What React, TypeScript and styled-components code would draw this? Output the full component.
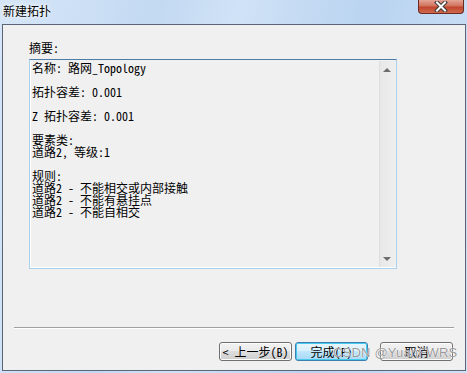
import React from 'react';
import styled, { createGlobalStyle } from 'styled-components';

const Global = createGlobalStyle`
  body {
    margin: 0;
    background: #c9ddf3;
  }
`

const Window = styled.div`
  position: relative;
  width: 467px;
  height: 373px;
  box-sizing: border-box;
  background: linear-gradient(100deg, #d6e6f8 0%, #c3d9f2 30%, #d0e2f6 45%, #b9d3f0 70%, #cfe2f7 100%);
  display: flex;
  flex-direction: column;
  overflow: hidden;
`

const TitleBar = styled.div`
  height: 24px;
  flex-shrink: 0;
  display: flex;
  align-items: flex-start;
  justify-content: space-between;
  padding-left: 3px;
  box-sizing: border-box;
`

const Title = styled.span`
  margin-top: 3px;
  font-family: "Noto Sans CJK SC", sans-serif;
  font-size: 12px;
  line-height: 16px;
  color: #000;
  text-shadow: 0 0 6px #fff, 0 0 3px #fff;
`

const CloseButton = styled.div`
  width: 46px;
  height: 14px;
  margin-right: 3px;
  box-sizing: border-box;
  border: 1px solid #6b2a22;
  border-top: none;
  border-radius: 0 0 4px 4px;
  background: linear-gradient(#e4a596 0%, #d2735d 45%, #c1452d 55%, #d06a4f 100%);
  display: flex;
  align-items: center;
  justify-content: center;
`

const Client = styled.div`
  flex: 1;
  margin: 0 1px 2px 2px;
  border: 1px solid #5a6677;
  background: #f0f0f0;
  display: flex;
  flex-direction: column;
  font-family: "Noto Sans Mono CJK SC", "Noto Sans CJK SC", monospace;
  font-size: 12px;
  color: #000;
`

const Body = styled.div`
  padding: 16px 0 0 26px;
`

const Label = styled.div`
  line-height: 14px;
  height: 14px;
`

const TextBox = styled.div`
  margin-top: 4px;
  width: 368px;
  height: 210px;
  box-sizing: border-box;
  border: 1px solid #a9d1ec;
  border-top-color: #4c7ca8;
  box-shadow: inset 1px 0 #fff, inset 0 -1px #fff;
  display: flex;
`

const TextArea = styled.pre`
  flex: 1;
  margin: 0;
  padding: 2px 0 0 2px;
  font: inherit;
  line-height: 12px;
  white-space: pre;
`

const Scrollbar = styled.div`
  width: 16px;
  margin: 1px 1px 1px 0;
  background: linear-gradient(90deg, #dcdcdc 0px, #e9e9e9 2px, #eeeeee 100%);
  display: flex;
  flex-direction: column;
  justify-content: space-between;
  align-items: center;
  padding: 7px 0 6px;
  box-sizing: border-box;
`

const Arrow = styled.div<{ $down?: boolean }>`
  width: 0;
  height: 0;
  border-left: 4px solid transparent;
  border-right: 4px solid transparent;
  ${p => p.$down ? 'border-top: 4px solid #6d6d6d;' : 'border-bottom: 4px solid #6d6d6d;'}
`

const Separator = styled.div`
  margin: 58px 11px 0 11px;
  height: 1px;
  background: #a0a0a0;
  border-bottom: 1px solid #fff;
`

const ButtonRow = styled.div`
  display: flex;
  justify-content: flex-end;
  padding: 13px 12px 0 0;
`

const Button = styled.button<{ $default?: boolean; $gap?: number }>`
  width: 73px;
  height: 19px;
  margin-left: ${p => p.$gap ?? 0}px;
  padding: 0;
  box-sizing: border-box;
  border: 1px solid ${p => p.$default ? '#3c7fb1' : '#707070'};
  border-radius: 3px;
  background: ${p => p.$default
    ? 'linear-gradient(#eaf6fd 0%, #d9f0fc 45%, #bee6fd 50%, #a7d9f5 100%)'
    : 'linear-gradient(#f2f2f2 0%, #ebebeb 45%, #dddddd 50%, #cfcfcf 100%)'};
  box-shadow: inset 0 0 0 1px ${p => p.$default ? '#48c9f0' : '#fcfcfc'};
  font-family: "Noto Sans Mono CJK SC", "Noto Sans CJK SC", monospace;
  font-size: 12px;
  line-height: 15px;
  color: #000;
`

// CSDN watermark stamped over the button row
const Watermark = styled.div`
  position: absolute;
  left: 333px;
  top: 345px;
  font-family: "Liberation Sans", Arial, sans-serif;
  font-size: 13px;
  letter-spacing: 0.2px;
  color: rgba(125, 125, 125, 0.8);
  text-shadow: 0 0 1px #fff, 0 0 1px #fff;
  pointer-events: none;
`

const summary = `名称: 路网_Topology

拓扑容差: 0.001

Z 拓扑容差: 0.001

要素类:
道路2, 等级:1

规则:
道路2 - 不能相交或内部接触
道路2 - 不能有悬挂点
道路2 - 不能自相交`

export default function App() {
  return (
    <>
      <Global />
      <Window>
        <TitleBar>
          <Title>新建拓扑</Title>
          <CloseButton>
            <svg width="14" height="11" viewBox="0 0 14 11">
              <path d="M3 1.5 L11 9.5 M11 1.5 L3 9.5" stroke="#3a3a3a" strokeWidth="4" strokeLinecap="square" />
              <path d="M3 1.5 L11 9.5 M11 1.5 L3 9.5" stroke="#fff" strokeWidth="2" strokeLinecap="square" />
            </svg>
          </CloseButton>
        </TitleBar>
        <Client>
          <Body>
            <Label>摘要:</Label>
            <TextBox>
              <TextArea>{summary}</TextArea>
              <Scrollbar>
                <Arrow />
                <Arrow $down />
              </Scrollbar>
            </TextBox>
          </Body>
          <Separator />
          <ButtonRow>
            <Button>&lt; 上一步(B)</Button>
            <Button $default $gap={3}>完成(F)</Button>
            <Button $gap={12}>取消</Button>
          </ButtonRow>
        </Client>
        <Watermark>CSDN @YuanFWRS</Watermark>
      </Window>
    </>
  );
}
